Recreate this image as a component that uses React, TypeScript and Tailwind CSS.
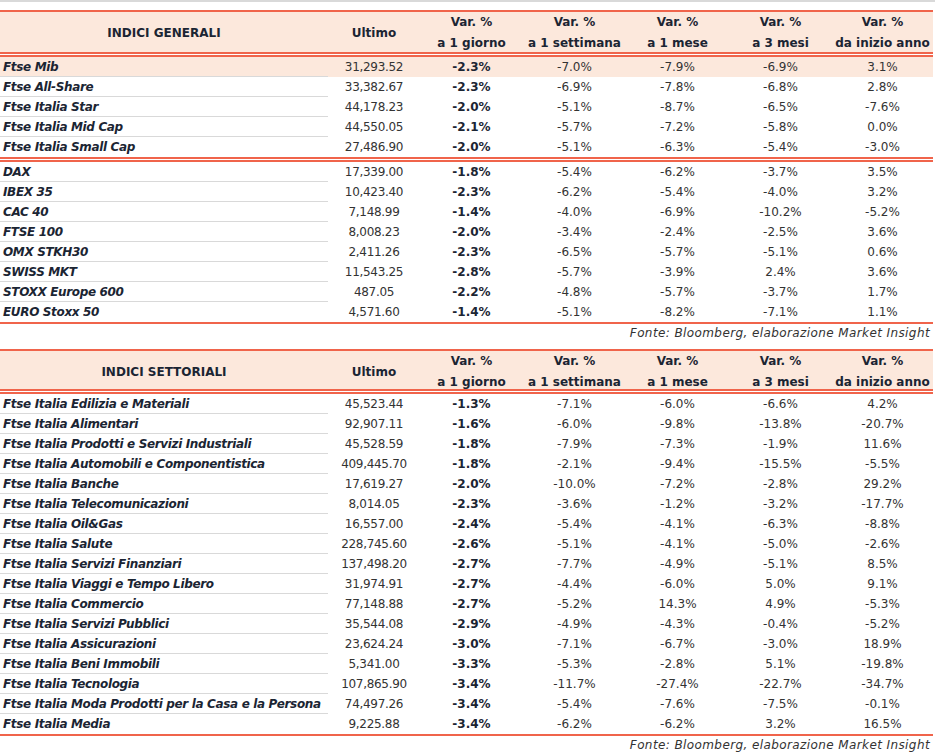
import React from "react";

type Row = { name: string; last: string; d1: string; w1: string; m1: string; m3: string; ytd: string; hl?: boolean };

const generali: Row[][] = [
  [
    { name: "Ftse Mib", last: "31,293.52", d1: "-2.3%", w1: "-7.0%", m1: "-7.9%", m3: "-6.9%", ytd: "3.1%", hl: true },
    { name: "Ftse All-Share", last: "33,382.67", d1: "-2.3%", w1: "-6.9%", m1: "-7.8%", m3: "-6.8%", ytd: "2.8%" },
    { name: "Ftse Italia Star", last: "44,178.23", d1: "-2.0%", w1: "-5.1%", m1: "-8.7%", m3: "-6.5%", ytd: "-7.6%" },
    { name: "Ftse Italia Mid Cap", last: "44,550.05", d1: "-2.1%", w1: "-5.7%", m1: "-7.2%", m3: "-5.8%", ytd: "0.0%" },
    { name: "Ftse Italia Small Cap", last: "27,486.90", d1: "-2.0%", w1: "-5.1%", m1: "-6.3%", m3: "-5.4%", ytd: "-3.0%" },
  ],
  [
    { name: "DAX", last: "17,339.00", d1: "-1.8%", w1: "-5.4%", m1: "-6.2%", m3: "-3.7%", ytd: "3.5%" },
    { name: "IBEX 35", last: "10,423.40", d1: "-2.3%", w1: "-6.2%", m1: "-5.4%", m3: "-4.0%", ytd: "3.2%" },
    { name: "CAC 40", last: "7,148.99", d1: "-1.4%", w1: "-4.0%", m1: "-6.9%", m3: "-10.2%", ytd: "-5.2%" },
    { name: "FTSE 100", last: "8,008.23", d1: "-2.0%", w1: "-3.4%", m1: "-2.4%", m3: "-2.5%", ytd: "3.6%" },
    { name: "OMX STKH30", last: "2,411.26", d1: "-2.3%", w1: "-6.5%", m1: "-5.7%", m3: "-5.1%", ytd: "0.6%" },
    { name: "SWISS MKT", last: "11,543.25", d1: "-2.8%", w1: "-5.7%", m1: "-3.9%", m3: "2.4%", ytd: "3.6%" },
    { name: "STOXX Europe 600", last: "487.05", d1: "-2.2%", w1: "-4.8%", m1: "-5.7%", m3: "-3.7%", ytd: "1.7%" },
    { name: "EURO Stoxx 50", last: "4,571.60", d1: "-1.4%", w1: "-5.1%", m1: "-8.2%", m3: "-7.1%", ytd: "1.1%" },
  ],
];

const settoriali: Row[][] = [
  [
    { name: "Ftse Italia Edilizia e Materiali", last: "45,523.44", d1: "-1.3%", w1: "-7.1%", m1: "-6.0%", m3: "-6.6%", ytd: "4.2%" },
    { name: "Ftse Italia Alimentari", last: "92,907.11", d1: "-1.6%", w1: "-6.0%", m1: "-9.8%", m3: "-13.8%", ytd: "-20.7%" },
    { name: "Ftse Italia Prodotti e Servizi Industriali", last: "45,528.59", d1: "-1.8%", w1: "-7.9%", m1: "-7.3%", m3: "-1.9%", ytd: "11.6%" },
    { name: "Ftse Italia Automobili e Componentistica", last: "409,445.70", d1: "-1.8%", w1: "-2.1%", m1: "-9.4%", m3: "-15.5%", ytd: "-5.5%" },
    { name: "Ftse Italia Banche", last: "17,619.27", d1: "-2.0%", w1: "-10.0%", m1: "-7.2%", m3: "-2.8%", ytd: "29.2%" },
    { name: "Ftse Italia Telecomunicazioni", last: "8,014.05", d1: "-2.3%", w1: "-3.6%", m1: "-1.2%", m3: "-3.2%", ytd: "-17.7%" },
    { name: "Ftse Italia Oil&Gas", last: "16,557.00", d1: "-2.4%", w1: "-5.4%", m1: "-4.1%", m3: "-6.3%", ytd: "-8.8%" },
    { name: "Ftse Italia Salute", last: "228,745.60", d1: "-2.6%", w1: "-5.1%", m1: "-4.1%", m3: "-5.0%", ytd: "-2.6%" },
    { name: "Ftse Italia Servizi Finanziari", last: "137,498.20", d1: "-2.7%", w1: "-7.7%", m1: "-4.9%", m3: "-5.1%", ytd: "8.5%" },
    { name: "Ftse Italia Viaggi e Tempo Libero", last: "31,974.91", d1: "-2.7%", w1: "-4.4%", m1: "-6.0%", m3: "5.0%", ytd: "9.1%" },
    { name: "Ftse Italia Commercio", last: "77,148.88", d1: "-2.7%", w1: "-5.2%", m1: "14.3%", m3: "4.9%", ytd: "-5.3%" },
    { name: "Ftse Italia Servizi Pubblici", last: "35,544.08", d1: "-2.9%", w1: "-4.9%", m1: "-4.3%", m3: "-0.4%", ytd: "-5.2%" },
    { name: "Ftse Italia Assicurazioni", last: "23,624.24", d1: "-3.0%", w1: "-7.1%", m1: "-6.7%", m3: "-3.0%", ytd: "18.9%" },
    { name: "Ftse Italia Beni Immobili", last: "5,341.00", d1: "-3.3%", w1: "-5.3%", m1: "-2.8%", m3: "5.1%", ytd: "-19.8%" },
    { name: "Ftse Italia Tecnologia", last: "107,865.90", d1: "-3.4%", w1: "-11.7%", m1: "-27.4%", m3: "-22.7%", ytd: "-34.7%" },
    { name: "Ftse Italia Moda Prodotti per la Casa e la Persona", last: "74,497.26", d1: "-3.4%", w1: "-5.4%", m1: "-7.6%", m3: "-7.5%", ytd: "-0.1%" },
    { name: "Ftse Italia Media", last: "9,225.88", d1: "-3.4%", w1: "-6.2%", m1: "-6.2%", m3: "3.2%", ytd: "16.5%" },
  ],
];

const cols = "grid grid-cols-[328px_92px_103px_103px_103px_103px_101px]";

const DoubleLine = () => (
  <div className="flex flex-col">
    <div className="h-[2px] bg-[#f0644b]" />
    <div className="h-[1px] bg-white" />
    <div className="h-[2px] bg-[#f0644b]" />
  </div>
);

const Header = ({ title, h }: { title: string; h: string }) => (
  <div>
    <div className="h-[2px] bg-[#f0644b]" />
    <div className={`${cols} ${h} bg-[#fce8dc] text-[12px] font-bold text-[#1b2533]`}>
      <div className="flex items-center justify-center">{title}</div>
      <div className="flex items-center justify-center">Ultimo</div>
      {["a 1 giorno", "a 1 settimana", "a 1 mese", "a 3 mesi", "da inizio anno"].map((s) => (
        <div key={s} className="flex flex-col items-center justify-center leading-[21px]">
          <span>Var. %</span>
          <span>{s}</span>
        </div>
      ))}
    </div>
    <DoubleLine />
  </div>
);

const Rows = ({ rows }: { rows: Row[] }) => (
  <div>
    {rows.map((r, i) => {
      const lastRow = i === rows.length - 1;
      return (
        <div key={r.name} className={`${cols} h-[20px] text-[12px] ${r.hl ? "bg-[#fce8dc]" : ""}`}>
          <div
            className={`flex items-center pl-[3px] font-bold italic text-[#1b2533] tracking-[-0.35px] whitespace-nowrap ${
              lastRow ? "" : "border-b border-[#d9d9d9]"
            }`}
          >
            {r.name}
          </div>
          <div className="flex items-center justify-center text-[#333] tracking-[-0.3px]">{r.last}</div>
          <div className="flex items-center justify-center font-bold text-[#1b2533]">{r.d1}</div>
          <div className="flex items-center justify-center text-[#333]">{r.w1}</div>
          <div className="flex items-center justify-center text-[#333]">{r.m1}</div>
          <div className="flex items-center justify-center text-[#333]">{r.m3}</div>
          <div className="flex items-center justify-center text-[#333]">{r.ytd}</div>
        </div>
      );
    })}
  </div>
);

const Source = () => (
  <div className="pr-[3px] text-right text-[12px] italic text-[#333] leading-[18px] tracking-[0.4px]">
    Fonte: Bloomberg, elaborazione Market Insight
  </div>
);

const Table = ({ title, groups, h }: { title: string; groups: Row[][]; h: string }) => (
  <div className="w-[933px]">
    <Header title={title} h={h} />
    {groups.map((g, i) => (
      <div key={i}>
        <Rows rows={g} />
        {i < groups.length - 1 ? <DoubleLine /> : <div className="h-[2px] bg-[#f0644b]" />}
      </div>
    ))}
    <Source />
  </div>
);

export default function App() {
  return (
    <div
      className="w-[935px] h-[756px] bg-white overflow-hidden"
      style={{ fontFamily: '"DejaVu Sans", "Liberation Sans", sans-serif' }}
    >
      <div className="h-[2px] bg-[#d9d9d9]" />
      <div className="h-[8px]" />
      <Table title="INDICI GENERALI" groups={generali} h="h-[40px]" />
      <div className="h-[7px]" />
      <Table title="INDICI SETTORIALI" groups={settoriali} h="h-[38px]" />
    </div>
  );
}
